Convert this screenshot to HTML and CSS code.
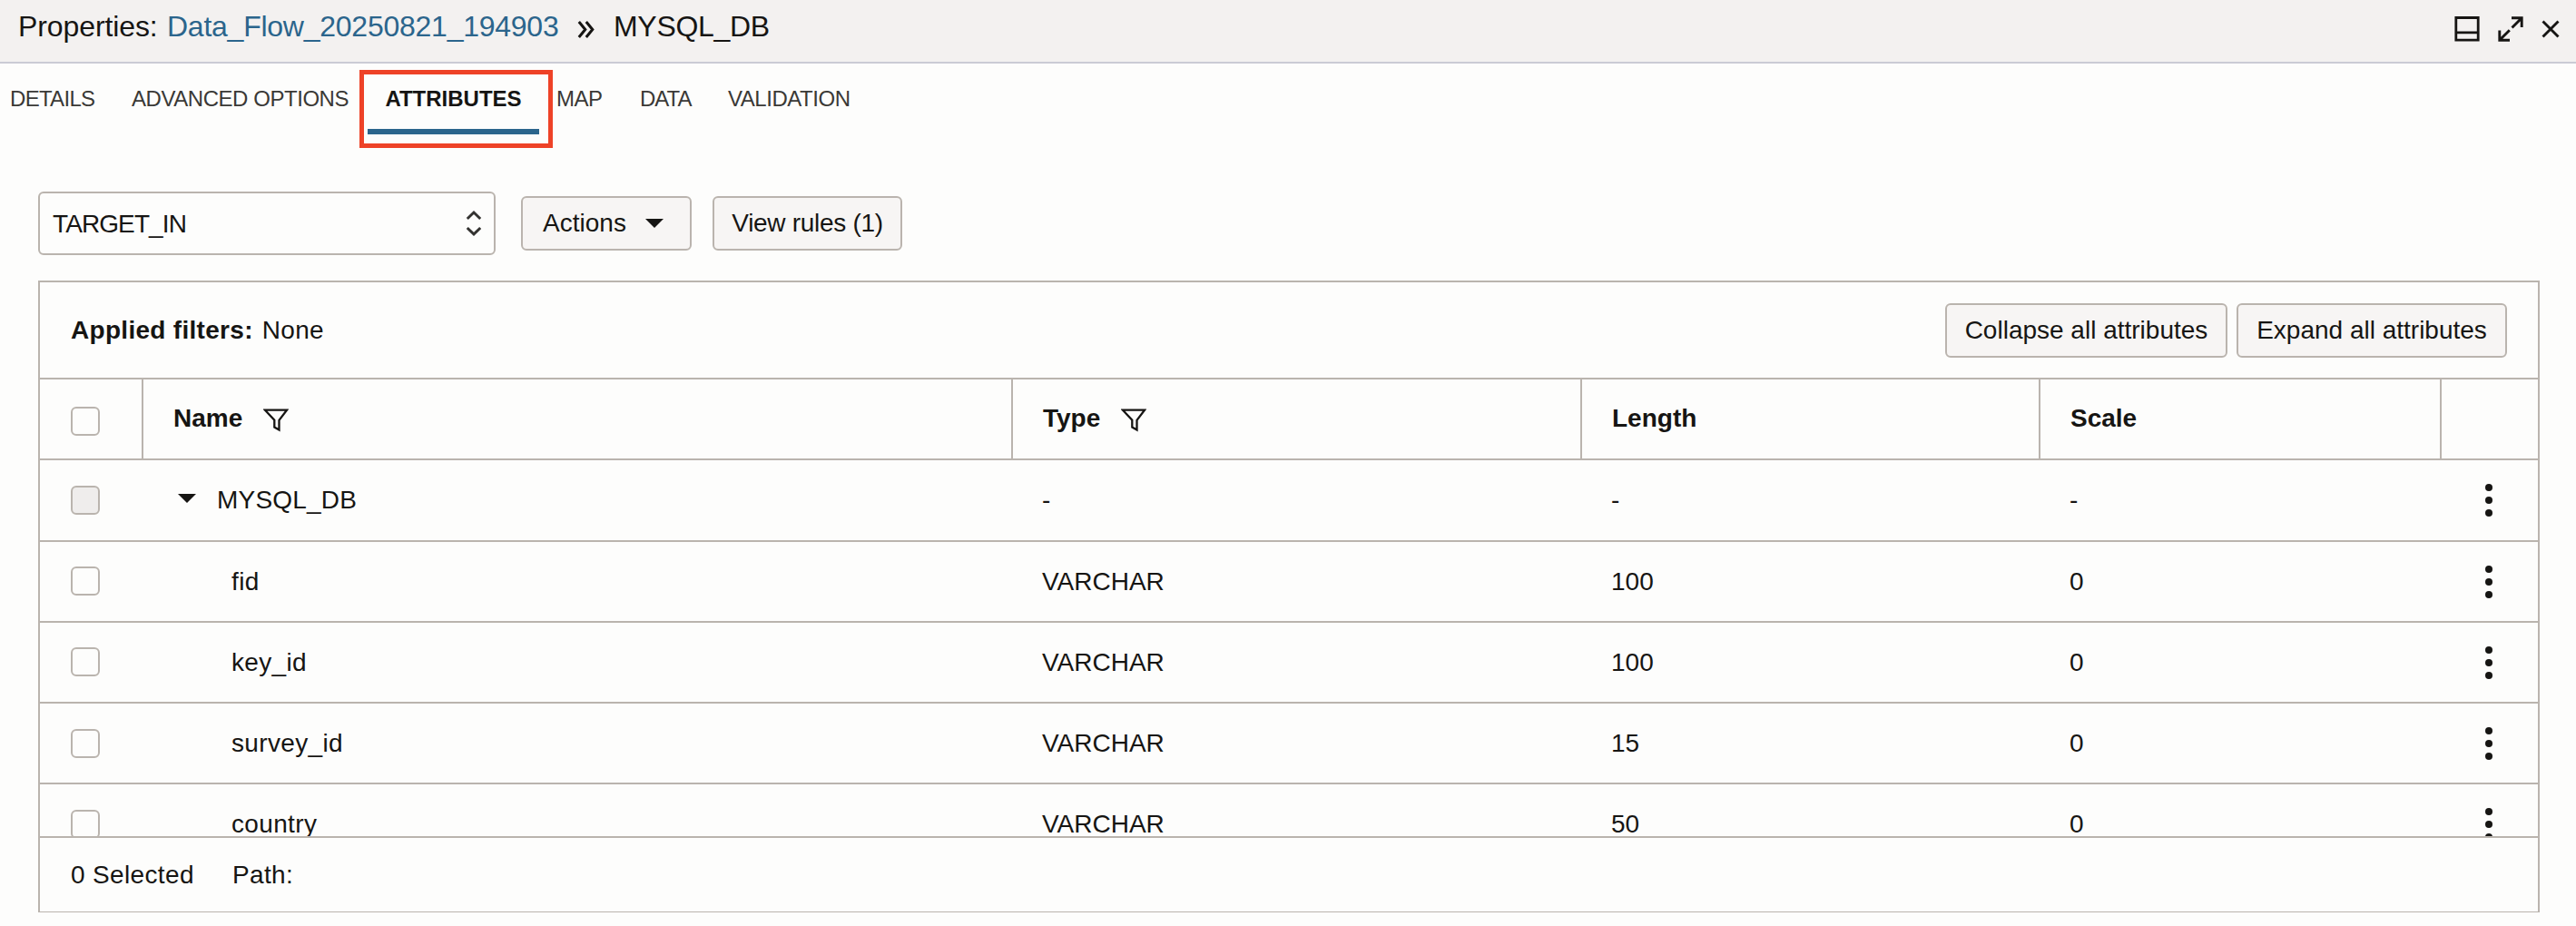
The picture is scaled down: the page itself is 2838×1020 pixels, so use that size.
FILE: index.html
```html
<!DOCTYPE html>
<html lang="en">
<head>
<meta charset="utf-8">
<title>Properties: Data_Flow_20250821_194903</title>
<link rel="stylesheet" href="styles.css">
</head>
<body>
<svg class="defs" width="0" height="0" aria-hidden="true">
  <symbol id="funnel" viewBox="0 0 28 26"><path d="M2 1.7H26L17.5 12.8V23.6L12.3 20.6V12.8Z" fill="none" stroke="currentColor" stroke-width="2.3"/></symbol>
  <symbol id="kebab" viewBox="0 0 8 36"><circle cx="4" cy="4" r="4"/><circle cx="4" cy="18" r="4"/><circle cx="4" cy="32" r="4"/></symbol>
  <symbol id="caret" viewBox="0 0 20 10"><path d="M0 0H20L10 10Z"/></symbol>
</svg>
<header class="titlebar">
  <h1 class="title"><span class="label">Properties:</span><a class="link">Data_Flow_20250821_194903</a>
    <svg class="sep" width="20" height="20" viewBox="0 0 20 20"><path d="M1.8 2L8.8 10.5L1.8 19M9.8 2L16.8 10.5L9.8 19" fill="none" stroke="currentColor" stroke-width="3"/></svg>
    <span class="node">MYSQL_DB</span></h1>
  <div class="window-icons">
    <svg width="28" height="28" viewBox="0 0 28 28"><path d="M1.8 1.5H26.2V26.2H1.8ZM1.8 17.8H26.2" fill="none" stroke="currentColor" stroke-width="2.8"/></svg>
    <svg width="28" height="28" viewBox="0 0 28 28"><path d="M15 1.8H26.2V12M26 2L15.5 12.5M1.8 15.5V26.2H13M2 26L12.8 15.2" fill="none" stroke="currentColor" stroke-width="2.9"/></svg>
    <svg width="20" height="20" viewBox="0 0 20 20"><path d="M1.5 1.5L18.5 18.5M18.5 1.5L1.5 18.5" fill="none" stroke="currentColor" stroke-width="2.9"/></svg>
  </div>
</header>
<nav class="tabs">
  <a class="tab details">DETAILS</a>
  <a class="tab advanced">ADVANCED OPTIONS</a>
  <a class="tab active">ATTRIBUTES<i class="highlight"></i></a>
  <a class="tab map">MAP</a>
  <a class="tab data">DATA</a>
  <a class="tab validation">VALIDATION</a>
</nav>
<div class="toolbar">
  <div class="select"><span>TARGET_IN</span>
    <svg width="18" height="30" viewBox="0 0 18 30"><path d="M1.8 10L9 3L16.2 10M1.8 20L9 27L16.2 20" fill="none" stroke="#333230" stroke-width="3"/></svg></div>
  <div class="button actions"><span>Actions</span><svg class="caret" width="20" height="10"><use href="#caret"/></svg></div>
  <div class="button rules">View rules (1)</div>
</div>
<main class="panel">
  <div class="filters">
    <div class="applied"><b>Applied filters:</b><span>None</span></div>
    <div class="button collapse">Collapse all attributes</div>
    <div class="button expand">Expand all attributes</div>
  </div>
  <div class="rows">
    <div class="row head">
      <div class="cell check"><i class="box"></i></div>
      <div class="cell name">Name<svg class="funnel" width="28" height="26"><use href="#funnel"/></svg></div>
      <div class="cell type">Type<svg class="funnel" width="28" height="26"><use href="#funnel"/></svg></div>
      <div class="cell length">Length</div><div class="cell scale">Scale</div><div class="cell menu"></div>
    </div>
    <div class="row">
      <div class="cell check"><i class="box disabled"></i></div>
      <div class="cell name parent"><svg class="caret" width="20" height="10"><use href="#caret"/></svg>MYSQL_DB</div>
      <div class="cell type">-</div><div class="cell length">-</div><div class="cell scale">-</div>
      <div class="cell menu"><svg width="8" height="36"><use href="#kebab"/></svg></div>
    </div>
    <div class="row">
      <div class="cell check"><i class="box"></i></div><div class="cell name child">fid</div>
      <div class="cell type">VARCHAR</div><div class="cell length">100</div><div class="cell scale">0</div>
      <div class="cell menu"><svg width="8" height="36"><use href="#kebab"/></svg></div>
    </div>
    <div class="row">
      <div class="cell check"><i class="box"></i></div><div class="cell name child">key_id</div>
      <div class="cell type">VARCHAR</div><div class="cell length">100</div><div class="cell scale">0</div>
      <div class="cell menu"><svg width="8" height="36"><use href="#kebab"/></svg></div>
    </div>
    <div class="row">
      <div class="cell check"><i class="box"></i></div><div class="cell name child">survey_id</div>
      <div class="cell type">VARCHAR</div><div class="cell length">15</div><div class="cell scale">0</div>
      <div class="cell menu"><svg width="8" height="36"><use href="#kebab"/></svg></div>
    </div>
    <div class="row">
      <div class="cell check"><i class="box"></i></div><div class="cell name child">country</div>
      <div class="cell type">VARCHAR</div><div class="cell length">50</div><div class="cell scale">0</div>
      <div class="cell menu"><svg width="8" height="36"><use href="#kebab"/></svg></div>
    </div>
  </div>
  <footer class="status"><span class="selected">0 Selected</span><span>Path:</span></footer>
</main>
</body>
</html>
```
FILE: styles.css
```css
* { box-sizing: border-box; }
body {
  margin: 0;
  height: 1020px;
  overflow: hidden;
  background: #fdfdfc;
  color: #161513;
  font: 28px/32px "Liberation Sans", Arial, sans-serif;
  white-space: nowrap;
}
svg { display: block; flex: none; fill: currentColor; }
.defs { display: none; }

.titlebar {
  display: flex;
  justify-content: space-between;
  height: 70px;
  padding: 0 18px 0 20px;
  background: #f3f1f0;
  border-bottom: 2px solid #cacbd5;
}
.title { display: flex; margin: 0; padding-top: 11px; font-size: 32px; font-weight: 400; line-height: 36px; }
.label { width: 164px; letter-spacing: -0.1px; }
.link { width: 452px; color: #2b658c; letter-spacing: -0.25px; }
.sep { margin-top: 11px; }
.node { margin-left: 20px; letter-spacing: -0.3px; }
.window-icons { display: flex; gap: 20px; padding-top: 18px; }
.window-icons svg:last-child { margin-top: 4px; }

.tabs { display: flex; height: 141px; padding: 8px 0 0 11px; font-size: 24px; color: #3a3936; letter-spacing: -0.45px; }
.tab { height: 70px; padding-top: 15px; }
.details { width: 134px; letter-spacing: -0.7px; }
.advanced { width: 260px; }
.active {
  position: relative;
  width: 189px;
  color: #161513;
  font-weight: 700;
  letter-spacing: 0;
  text-align: center;
  border-bottom: 6px solid #2b658c;
}
.highlight { position: absolute; left: -9px; top: -1px; width: 213px; height: 86px; border: 5px solid #ee4227; }
.map { margin-left: 19px; width: 92px; }
.data { width: 97px; letter-spacing: -1px; }

.toolbar { display: flex; align-items: center; height: 70px; padding-left: 42px; }
.select {
  display: flex;
  align-items: center;
  justify-content: space-between;
  width: 504px;
  height: 70px;
  padding: 0 13px 0 14px;
  border: 2px solid #bab4ae;
  border-radius: 6px;
  letter-spacing: -0.9px;
}
.select span { padding-top: 1px; }
.button {
  display: flex;
  align-items: center;
  justify-content: center;
  height: 60px;
  background: #f7f5f4;
  border: 2px solid #bab4ae;
  border-radius: 6px;
}
.actions { width: 188px; margin: 0 23px 0 28px; padding-right: 7px; gap: 21px; }
.rules { width: 209px; letter-spacing: -0.3px; }

.panel {
  display: flex;
  flex-direction: column;
  width: 2756px;
  height: 696px;
  margin: 28px 0 0 42px;
  border: 2px solid #bab4ae;
  border-bottom-width: 1px;
}
.filters { display: flex; align-items: center; height: 107px; flex: none; padding: 0 34px; border-bottom: 2px solid #bab4ae; }
.applied { display: flex; gap: 10px; flex: 1; letter-spacing: 0.3px; }
.collapse { width: 311px; margin-right: 10px; }
.expand { width: 298px; }

.rows { flex: 1; overflow: hidden; }
.row {
  display: grid;
  grid-template-columns: 112px 958px 627px 505px 442px 108px;
  height: 89.25px;
  border-bottom: 2px solid #bab4ae;
}
.cell { display: flex; align-items: center; padding: 1px 0 0 34px; }
.check { padding-top: 0; }
.box { width: 32px; height: 32px; border: 2px solid #bab4ae; border-radius: 6px; }
.box.disabled { background: #efedec; }
.name.parent { padding-left: 40px; letter-spacing: 0.2px; }
.parent .caret { margin: -4px 23px 0 0; }
.name.child { padding-left: 99px; letter-spacing: 0.35px; }
.cell.menu { padding-left: 50px; }
.head { font-weight: 700; }
.head .cell { border-left: 2px solid #bab4ae; padding: 0 0 1px 33px; }
.head .cell.check { border-left: 0; padding: 4px 0 0 34px; }
.funnel { margin-left: 23px; margin-top: 3px; }

.status { display: flex; align-items: center; height: 83px; flex: none; padding-left: 34px; border-top: 2px solid #bab4ae; letter-spacing: 0.35px; }
.selected { width: 178px; }
```
